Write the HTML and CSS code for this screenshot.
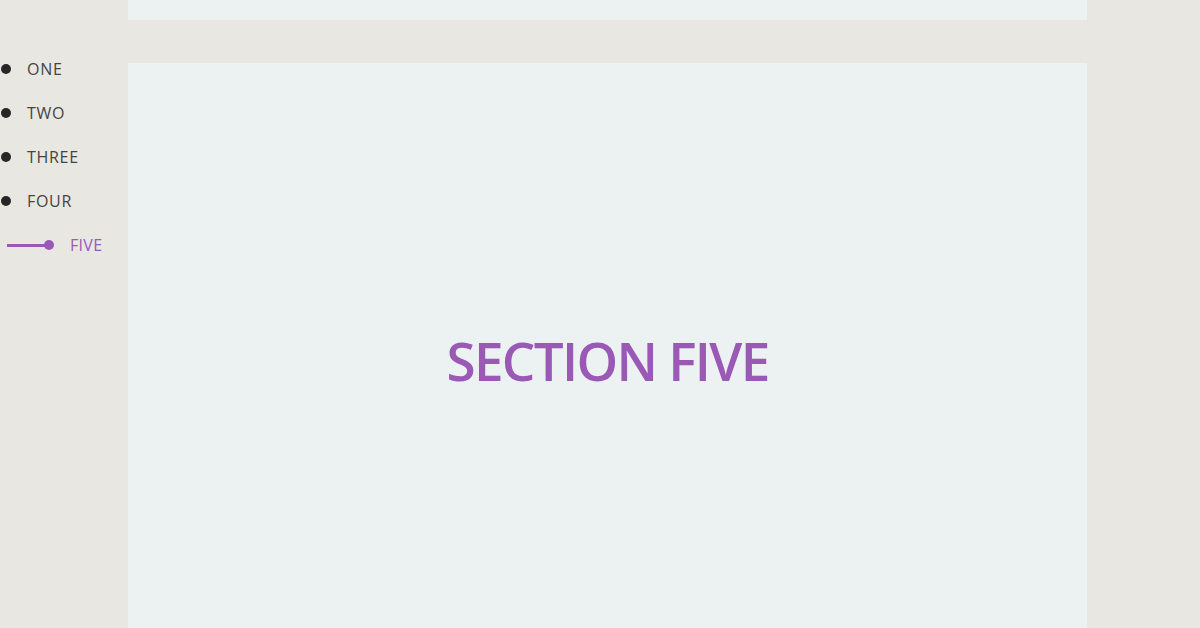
FILE: index.html
```html
<!DOCTYPE html>
<html lang="en">
<head>
<meta charset="utf-8">
<title>Sections</title>
<link rel="stylesheet" href="styles.css">
</head>
<body>
<div class="page">
  <nav class="nav">
    <a class="nav-item"><span class="dot"></span><span class="label">ONE</span></a>
    <a class="nav-item"><span class="dot"></span><span class="label">TWO</span></a>
    <a class="nav-item"><span class="dot"></span><span class="label">THREE</span></a>
    <a class="nav-item"><span class="dot"></span><span class="label">FOUR</span></a>
    <a class="nav-item active"><span class="line"></span><span class="dot"></span><span class="label">FIVE</span></a>
  </nav>
  <main class="main">
    <section class="section section-prev"></section>
    <section class="section section-five"><h1 class="title">SECTION FIVE</h1></section>
  </main>
</div>
</body>
</html>
```
FILE: styles.css
```css
html, body {
  margin: 0;
  padding: 0;
  height: 100%;
  overflow: hidden;
}
body {
  background: #e9e7e2;
  font-family: "Open Sans", "Liberation Sans", sans-serif;
  color: #444;
}
.page {
  display: flex;
  height: 628px;
  overflow: hidden;
}
.nav {
  width: 128px;
  flex: none;
  display: flex;
  flex-direction: column;
  padding-top: 47px;
  box-sizing: border-box;
}
.nav-item {
  display: flex;
  align-items: center;
  height: 44px;
  font-size: 16px;
  letter-spacing: 0.7px;
  color: #444;
  text-decoration: none;
}
.dot {
  width: 10px;
  height: 10px;
  border-radius: 50%;
  background: #262626;
  margin-left: 1px;
  flex: none;
}
.label {
  margin-left: 16px;
  line-height: 22px;
}
.nav-item.active {
  color: #9b59b6;
  letter-spacing: 0.3px;
}
.nav-item.active .line {
  width: 38px;
  height: 3px;
  margin-left: 7px;
  background: #9b59b6;
  flex: none;
}
.nav-item.active .dot {
  background: #9b59b6;
  margin-left: -1px;
}
.main {
  width: 959px;
  flex: none;
  display: flex;
  flex-direction: column;
  gap: 43px;
}
.section {
  background: #ecf1f1;
  flex: none;
}
.section-prev {
  height: 20px;
}
.section-five {
  height: 594px;
  display: flex;
  align-items: center;
  justify-content: center;
}
.title {
  margin: 0;
  font-size: 53px;
  font-weight: 600;
  letter-spacing: -1.7px;
  color: #9b59b6;
}
```
